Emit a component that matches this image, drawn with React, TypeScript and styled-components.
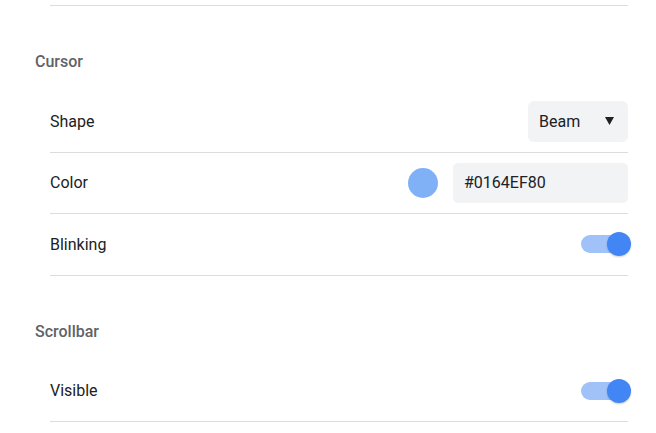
import React, { ReactElement } from 'react';
import styled, { createGlobalStyle } from 'styled-components';

const GlobalStyle = createGlobalStyle`
  html, body {
    margin: 0;
    padding: 0;
    background: #fff;
    font-family: Roboto, 'Liberation Sans', sans-serif;
  }
`;

const Page = styled.div`
  width: 656px;
  padding: 0 28px 0 35px;
  box-sizing: border-box;
`;

const PrevRowEdge = styled.div`
  height: 5px;
  margin-left: 15px;
  border-bottom: 1px solid #dadce0;
`;

const Section = styled.section`
  display: flex;
  flex-direction: column;
`;

const SectionTitle = styled.h2`
  margin: 46px 0 19px;
  height: 20px;
  line-height: 20px;
  font-size: 16px;
  font-weight: 500;
  color: #5f6368;
`;

const List = styled.div`
  margin-left: 15px;
  display: flex;
  flex-direction: column;
`;

const Row = styled.div`
  height: 61.5px;
  box-sizing: border-box;
  display: flex;
  align-items: center;
  justify-content: space-between;
  border-bottom: 1px solid #dadce0;
`;

const Label = styled.span`
  font-size: 16px;
  color: #202124;
`;

const Controls = styled.div`
  display: flex;
  align-items: center;
  gap: 15px;
`;

const Select = styled.div`
  width: 100px;
  height: 41px;
  box-sizing: border-box;
  padding: 0 14px 0 11px;
  border-radius: 6px;
  background: #f1f3f4;
  display: flex;
  align-items: center;
  justify-content: space-between;
  font-size: 16px;
  color: #202124;
`;

const Swatch = styled.span<{ $color: string }>`
  width: 30px;
  height: 30px;
  border-radius: 50%;
  background: ${(p) => p.$color};
`;

const TextInput = styled.div`
  width: 175px;
  height: 40px;
  box-sizing: border-box;
  padding-left: 11px;
  border-radius: 5px;
  background: #f1f3f4;
  display: flex;
  align-items: center;
  font-size: 16px;
  color: #202124;
`;

const Track = styled.span`
  position: relative;
  flex: none;
  width: 47px;
  height: 18px;
  border-radius: 9px;
  background: #a0c2f9;
`;

const Knob = styled.span<{ $on: boolean }>`
  position: absolute;
  top: -3px;
  left: ${(p) => (p.$on ? '26px' : '-3px')};
  width: 24px;
  height: 24px;
  border-radius: 50%;
  background: #4285f4;
  box-shadow: 0 1px 2px rgba(0, 0, 0, 0.2);
`;

const Toggle = ({ on }: { on: boolean }): ReactElement => (
  <Track>
    <Knob $on={on} />
  </Track>
);

const Arrow = (): ReactElement => (
  <svg width="9" height="8" viewBox="0 0 9 8">
    <polygon points="0,0 9,0 4.5,8" fill="#202124" />
  </svg>
);

const App = (): ReactElement => (
  <Page>
    <GlobalStyle />
    <PrevRowEdge />
    <Section>
      <SectionTitle>Cursor</SectionTitle>
      <List>
        <Row>
          <Label>Shape</Label>
          <Select>
            <span>Beam</span>
            <Arrow />
          </Select>
        </Row>
        <Row>
          <Label>Color</Label>
          <Controls>
            <Swatch $color="rgba(1, 100, 239, 0.5)" />
            <TextInput>#0164EF80</TextInput>
          </Controls>
        </Row>
        <Row>
          <Label>Blinking</Label>
          <Toggle on />
        </Row>
      </List>
    </Section>
    <Section>
      <SectionTitle>Scrollbar</SectionTitle>
      <List>
        <Row>
          <Label>Visible</Label>
          <Toggle on />
        </Row>
      </List>
    </Section>
  </Page>
);

export default App;
